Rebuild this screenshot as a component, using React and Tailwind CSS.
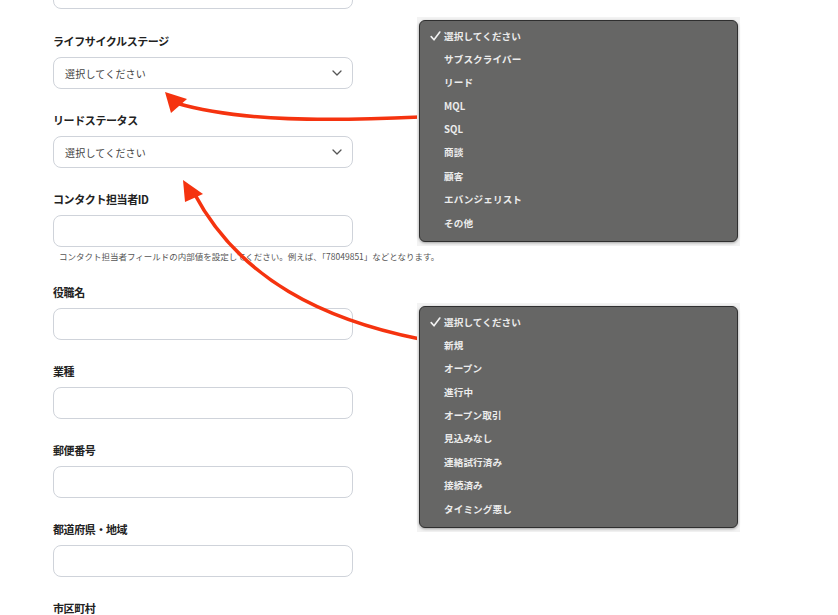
import React from 'react';

const jp = { fontFamily: '"Noto Sans CJK JP", "Noto Sans", sans-serif' };

const lifecycleOptions = ['選択してください', 'サブスクライバー', 'リード', 'MQL', 'SQL', '商談', '顧客', 'エバンジェリスト', 'その他'];
const leadStatusOptions = ['選択してください', '新規', 'オープン', '進行中', 'オープン取引', '見込みなし', '連絡試行済み', '接続済み', 'タイミング悪し'];

function Label({ children }) {
  return <div className="h-[16px] leading-[16px] text-[11px] font-bold text-[#222] tracking-[-0.4px]">{children}</div>;
}

function TextInput() {
  return <div className="h-[32px] w-[300px] rounded-[8px] border border-[#cfd3da] bg-white" />;
}

function SelectBox() {
  return (
    <div className="h-[32px] w-[300px] rounded-[8px] border border-[#cfd3da] bg-white flex items-center justify-between pl-[11px] pr-[10px]">
      <span className="text-[10px] text-[#444] tracking-[0.2px]">選択してください</span>
      <svg width="10" height="6" viewBox="0 0 10 6" fill="none">
        <path d="M1 1l4 4 4-4" stroke="#555" strokeWidth="1.3" strokeLinecap="round" strokeLinejoin="round" />
      </svg>
    </div>
  );
}

function Field({ label, select, help }) {
  return (
    <div className="flex flex-col">
      <Label>{label}</Label>
      <div className="mt-[8px]">{select ? <SelectBox /> : <TextInput />}</div>
      {help ? (
        <div className="mt-[3px] mb-[22px] pl-[6px] h-[12px] leading-[12px] text-[8.5px] text-[#555] whitespace-nowrap">{help}</div>
      ) : (
        <div className="h-[23px]" />
      )}
    </div>
  );
}

function Menu({ items, className }) {
  return (
    <div className={`absolute w-[323px] h-[229px] bg-[#f3f3f3] pl-[2px] pt-[3px] pr-[2px] pb-[4px] ${className}`}>
      <div className="h-full w-full rounded-[6px] border border-[#2f2f2f] bg-[#666665] shadow-[0_1px_3px_rgba(0,0,0,0.35)] pt-[3px]">
        {items.map((it, i) => (
          <div key={it} className="h-[23.4px] flex items-center">
            <div className="w-[24px] flex justify-end pr-[3px]">
              {i === 0 && (
                <svg width="11" height="10" viewBox="0 0 11 10" fill="none">
                  <path d="M1.2 5.6l2.8 3.2L9.8 1" stroke="#f2f2f2" strokeWidth="1.6" strokeLinecap="round" strokeLinejoin="round" />
                </svg>
              )}
            </div>
            <span className="text-[9.6px] font-bold text-[#ececec] tracking-[0.1px]">{it}</span>
          </div>
        ))}
      </div>
    </div>
  );
}

export default function App() {
  return (
    <div className="relative w-[838px] h-[615px] overflow-hidden bg-white" style={jp}>
      <div className="pl-[53px] flex flex-col">
        <div className="-mt-[23px] mb-[24px]">
          <TextInput />
        </div>
        <Field label="ライフサイクルステージ" select />
        <Field label="リードステータス" select />
        <Field label="コンタクト担当者ID" help="コンタクト担当者フィールドの内部値を設定してください。例えば、「78049851」などとなります。" />
        <Field label="役職名" />
        <Field label="業種" />
        <Field label="郵便番号" />
        <Field label="都道府県・地域" />
        <Field label="市区町村" />
      </div>

      <svg className="absolute inset-0 pointer-events-none" width="838" height="615" viewBox="0 0 838 615">
        <path d="M420 117 C 330 121 240 122 176 103" stroke="#f5330f" strokeWidth="3.6" fill="none" strokeLinecap="round" />
        <polygon points="165,92 187,99 171,113" fill="#f5330f" />
        <path d="M420 339 C 325 320 240 280 194 193" stroke="#f5330f" strokeWidth="3.6" fill="none" strokeLinecap="round" />
        <polygon points="183,180 203,194 185,202" fill="#f5330f" />
      </svg>

      <Menu items={lifecycleOptions} className="left-[417px] top-[17px]" />
      <Menu items={leadStatusOptions} className="left-[417px] top-[303px]" />
    </div>
  );
}
